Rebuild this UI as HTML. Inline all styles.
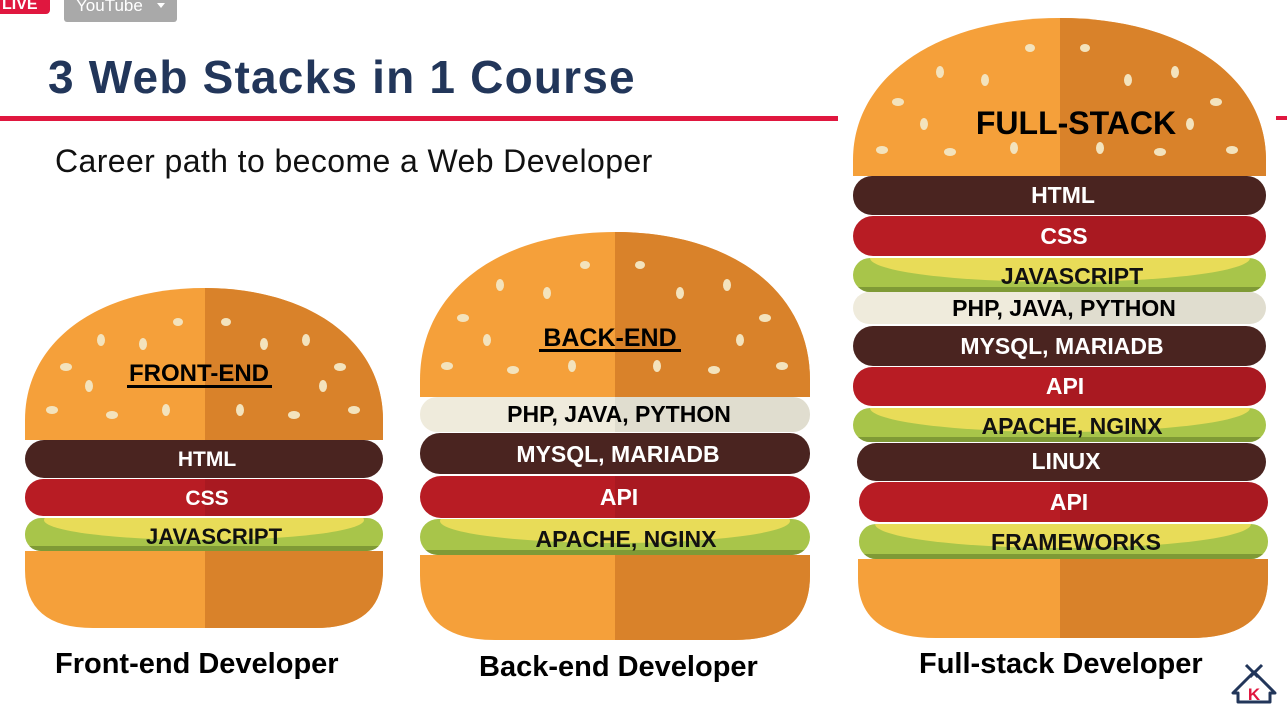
<!DOCTYPE html>
<html><head><meta charset="utf-8"><style>
html,body{margin:0;padding:0;background:#fff;width:1287px;height:720px;overflow:hidden;font-family:"Liberation Sans",sans-serif}
</style></head><body>
<svg width="1287" height="720" viewBox="0 0 1287 720" xmlns="http://www.w3.org/2000/svg" font-family="Liberation Sans, sans-serif">
<defs>
<clipPath id="r1"><rect x="205" y="0" width="300" height="720"/></clipPath>
<clipPath id="r2"><rect x="615" y="0" width="300" height="720"/></clipPath>
<clipPath id="r3"><rect x="1060" y="0" width="300" height="720"/></clipPath>
<clipPath id="g1"><rect x="25" y="518" width="358" height="33" rx="16"/></clipPath>
<clipPath id="g2"><rect x="420" y="519" width="390" height="36" rx="18"/></clipPath>
<clipPath id="g3"><rect x="853" y="258" width="413" height="34" rx="17"/></clipPath>
<clipPath id="g4"><rect x="853" y="408" width="413" height="34" rx="17"/></clipPath>
<clipPath id="g5"><rect x="859" y="524" width="409" height="35" rx="17"/></clipPath>
</defs>
<rect x="-6" y="-8" width="56" height="22" rx="4" fill="#e0173f"/>
<text x="2" y="9" font-size="16" fill="#fff" font-weight="bold">LIVE</text>
<rect x="64" y="-8" width="113" height="30" rx="3" fill="#a9a9a9"/>
<text x="76" y="11" font-size="17" fill="#fff">YouTube</text>
<path d="M157,3 L165,3 L161,8 Z" fill="#fff"/>
<text x="48" y="93" font-size="46" font-weight="bold" fill="#22365a" letter-spacing="1.2">3 Web Stacks in 1 Course</text>
<rect x="0" y="116" width="838" height="5" fill="#e0173f"/>
<rect x="1276" y="116" width="11" height="4" fill="#e0173f"/>
<text x="55" y="172" font-size="32" fill="#111" letter-spacing="0.4">Career path to become a Web Developer</text>

<!-- BURGER 1 -->
<g>
<path d="M25,420 C25,340 100,288 204,288 C308,288 383,340 383,420 L383,440 L25,440 Z" fill="#f5a03a"/>
<path d="M25,420 C25,340 100,288 204,288 C308,288 383,340 383,420 L383,440 L25,440 Z" fill="#d9822a" clip-path="url(#r1)"/>
<g fill="#f3e3bd">
<ellipse cx="178" cy="322" rx="5" ry="4"/><ellipse cx="226" cy="322" rx="5" ry="4"/>
<ellipse cx="101" cy="340" rx="4" ry="6"/><ellipse cx="143" cy="344" rx="4" ry="6"/><ellipse cx="264" cy="344" rx="4" ry="6"/><ellipse cx="306" cy="340" rx="4" ry="6"/>
<ellipse cx="66" cy="367" rx="6" ry="4"/><ellipse cx="89" cy="386" rx="4" ry="6"/><ellipse cx="323" cy="386" rx="4" ry="6"/><ellipse cx="340" cy="367" rx="6" ry="4"/>
<ellipse cx="52" cy="410" rx="6" ry="4"/><ellipse cx="112" cy="415" rx="6" ry="4"/><ellipse cx="166" cy="410" rx="4" ry="6"/><ellipse cx="240" cy="410" rx="4" ry="6"/><ellipse cx="294" cy="415" rx="6" ry="4"/><ellipse cx="354" cy="410" rx="6" ry="4"/>
</g>
<text x="199" y="381" font-size="24" font-weight="bold" text-anchor="middle" fill="#000">FRONT-END</text>
<rect x="127" y="385" width="145" height="3" fill="#000"/>
<rect x="25" y="440" width="358" height="38" rx="19" fill="#4a2420"/>
<text x="207" y="466" font-size="21" font-weight="bold" fill="#fff" text-anchor="middle">HTML</text>
<rect x="25" y="479" width="358" height="37" rx="18" fill="#b81c24"/>
<rect x="25" y="479" width="358" height="37" rx="18" fill="#000" opacity=".08" clip-path="url(#r1)"/>
<text x="207" y="505" font-size="21" font-weight="bold" fill="#fff" text-anchor="middle">CSS</text>
<rect x="25" y="518" width="358" height="33" rx="16" fill="#a8c54a"/>
<g clip-path="url(#g1)"><ellipse cx="204" cy="520" rx="160" ry="20" fill="#e8dc58"/><rect x="25" y="546" width="358" height="5" fill="#7f9a36"/></g>
<text x="214" y="544" font-size="22" font-weight="bold" fill="#111" text-anchor="middle">JAVASCRIPT</text>
<path d="M25,551 L383,551 L383,570 Q383,628 315,628 L93,628 Q25,628 25,570 Z" fill="#f5a03a"/>
<path d="M25,551 L383,551 L383,570 Q383,628 315,628 L93,628 Q25,628 25,570 Z" fill="#d9822a" clip-path="url(#r1)"/>
</g>
<text x="55" y="673" font-size="29" font-weight="bold" fill="#000">Front-end Developer</text>

<!-- BURGER 2 -->
<g>
<path d="M420,380 C420,290 500,232 615,232 C730,232 810,290 810,380 L810,397 L420,397 Z" fill="#f5a03a"/>
<path d="M420,380 C420,290 500,232 615,232 C730,232 810,290 810,380 L810,397 L420,397 Z" fill="#d9822a" clip-path="url(#r2)"/>
<g fill="#f3e3bd">
<ellipse cx="585" cy="265" rx="5" ry="4"/><ellipse cx="640" cy="265" rx="5" ry="4"/>
<ellipse cx="500" cy="285" rx="4" ry="6"/><ellipse cx="547" cy="293" rx="4" ry="6"/><ellipse cx="680" cy="293" rx="4" ry="6"/><ellipse cx="727" cy="285" rx="4" ry="6"/>
<ellipse cx="463" cy="318" rx="6" ry="4"/><ellipse cx="487" cy="340" rx="4" ry="6"/><ellipse cx="740" cy="340" rx="4" ry="6"/><ellipse cx="765" cy="318" rx="6" ry="4"/>
<ellipse cx="447" cy="366" rx="6" ry="4"/><ellipse cx="513" cy="370" rx="6" ry="4"/><ellipse cx="572" cy="366" rx="4" ry="6"/><ellipse cx="657" cy="366" rx="4" ry="6"/><ellipse cx="714" cy="370" rx="6" ry="4"/><ellipse cx="782" cy="366" rx="6" ry="4"/>
</g>
<text x="610" y="346" font-size="25" font-weight="bold" text-anchor="middle" fill="#000">BACK-END</text>
<rect x="539" y="349" width="142" height="3" fill="#000"/>
<rect x="420" y="397" width="390" height="35" rx="17" fill="#efebdc"/>
<rect x="420" y="397" width="390" height="35" rx="17" fill="#000" opacity=".06" clip-path="url(#r2)"/>
<text x="619" y="422" font-size="23" font-weight="bold" fill="#000" text-anchor="middle">PHP, JAVA, PYTHON</text>
<rect x="420" y="433" width="390" height="41" rx="20" fill="#4a2420"/>
<text x="618" y="462" font-size="23" font-weight="bold" fill="#fff" text-anchor="middle">MYSQL, MARIADB</text>
<rect x="420" y="476" width="390" height="42" rx="21" fill="#b81c24"/>
<rect x="420" y="476" width="390" height="42" rx="21" fill="#000" opacity=".08" clip-path="url(#r2)"/>
<text x="619" y="505" font-size="23" font-weight="bold" fill="#fff" text-anchor="middle">API</text>
<rect x="420" y="519" width="390" height="36" rx="18" fill="#a8c54a"/>
<g clip-path="url(#g2)"><ellipse cx="615" cy="521" rx="175" ry="22" fill="#e8dc58"/><rect x="420" y="550" width="390" height="5" fill="#7f9a36"/></g>
<text x="626" y="547" font-size="23" font-weight="bold" fill="#111" text-anchor="middle">APACHE, NGINX</text>
<path d="M420,555 L810,555 L810,575 Q810,640 735,640 L495,640 Q420,640 420,575 Z" fill="#f5a03a"/>
<path d="M420,555 L810,555 L810,575 Q810,640 735,640 L495,640 Q420,640 420,575 Z" fill="#d9822a" clip-path="url(#r2)"/>
</g>
<text x="479" y="676" font-size="29" font-weight="bold" fill="#000">Back-end Developer</text>

<!-- BURGER 3 -->
<g>
<path d="M853,160 C853,75 940,18 1060,18 C1180,18 1266,75 1266,160 L1266,176 L853,176 Z" fill="#f5a03a"/>
<path d="M853,160 C853,75 940,18 1060,18 C1180,18 1266,75 1266,160 L1266,176 L853,176 Z" fill="#d9822a" clip-path="url(#r3)"/>
<g fill="#f3e3bd">
<ellipse cx="1030" cy="48" rx="5" ry="4"/><ellipse cx="1085" cy="48" rx="5" ry="4"/>
<ellipse cx="940" cy="72" rx="4" ry="6"/><ellipse cx="985" cy="80" rx="4" ry="6"/><ellipse cx="1128" cy="80" rx="4" ry="6"/><ellipse cx="1175" cy="72" rx="4" ry="6"/>
<ellipse cx="898" cy="102" rx="6" ry="4"/><ellipse cx="924" cy="124" rx="4" ry="6"/><ellipse cx="1190" cy="124" rx="4" ry="6"/><ellipse cx="1216" cy="102" rx="6" ry="4"/>
<ellipse cx="882" cy="150" rx="6" ry="4"/><ellipse cx="950" cy="152" rx="6" ry="4"/><ellipse cx="1014" cy="148" rx="4" ry="6"/><ellipse cx="1100" cy="148" rx="4" ry="6"/><ellipse cx="1160" cy="152" rx="6" ry="4"/><ellipse cx="1232" cy="150" rx="6" ry="4"/>
</g>
<text x="1076" y="134" font-size="32" font-weight="bold" text-anchor="middle" fill="#000">FULL-STACK</text>
<rect x="853" y="176" width="413" height="39" rx="19" fill="#4a2420"/>
<text x="1063" y="203" font-size="23" font-weight="bold" fill="#fff" text-anchor="middle">HTML</text>
<rect x="853" y="216" width="413" height="40" rx="20" fill="#b81c24"/>
<rect x="853" y="216" width="413" height="40" rx="20" fill="#000" opacity=".08" clip-path="url(#r3)"/>
<text x="1064" y="244" font-size="23" font-weight="bold" fill="#fff" text-anchor="middle">CSS</text>
<rect x="853" y="258" width="413" height="34" rx="17" fill="#a8c54a"/>
<g clip-path="url(#g3)"><ellipse cx="1060" cy="258" rx="190" ry="24" fill="#e8dc58"/><rect x="853" y="287" width="413" height="5" fill="#7f9a36"/></g>
<text x="1072" y="284" font-size="23" font-weight="bold" fill="#111" text-anchor="middle">JAVASCRIPT</text>
<rect x="853" y="292" width="413" height="32" rx="16" fill="#efebdc"/>
<rect x="853" y="292" width="413" height="32" rx="16" fill="#000" opacity=".06" clip-path="url(#r3)"/>
<text x="1064" y="316" font-size="23" font-weight="bold" fill="#000" text-anchor="middle">PHP, JAVA, PYTHON</text>
<rect x="853" y="326" width="413" height="40" rx="20" fill="#4a2420"/>
<text x="1062" y="354" font-size="23" font-weight="bold" fill="#fff" text-anchor="middle">MYSQL, MARIADB</text>
<rect x="853" y="367" width="413" height="39" rx="19" fill="#b81c24"/>
<rect x="853" y="367" width="413" height="39" rx="19" fill="#000" opacity=".08" clip-path="url(#r3)"/>
<text x="1065" y="394" font-size="23" font-weight="bold" fill="#fff" text-anchor="middle">API</text>
<rect x="853" y="408" width="413" height="34" rx="17" fill="#a8c54a"/>
<g clip-path="url(#g4)"><ellipse cx="1060" cy="408" rx="190" ry="24" fill="#e8dc58"/><rect x="853" y="437" width="413" height="5" fill="#7f9a36"/></g>
<text x="1072" y="434" font-size="23" font-weight="bold" fill="#111" text-anchor="middle">APACHE, NGINX</text>
<rect x="857" y="443" width="409" height="38" rx="19" fill="#4a2420"/>
<text x="1066" y="469" font-size="23" font-weight="bold" fill="#fff" text-anchor="middle">LINUX</text>
<rect x="859" y="482" width="409" height="40" rx="20" fill="#b81c24"/>
<rect x="859" y="482" width="409" height="40" rx="20" fill="#000" opacity=".08" clip-path="url(#r3)"/>
<text x="1069" y="510" font-size="23" font-weight="bold" fill="#fff" text-anchor="middle">API</text>
<rect x="859" y="524" width="409" height="35" rx="17" fill="#a8c54a"/>
<g clip-path="url(#g5)"><ellipse cx="1063" cy="524" rx="188" ry="24" fill="#e8dc58"/><rect x="859" y="554" width="409" height="5" fill="#7f9a36"/></g>
<text x="1076" y="550" font-size="23" font-weight="bold" fill="#111" text-anchor="middle">FRAMEWORKS</text>
<path d="M858,559 L1268,559 L1268,578 Q1268,638 1190,638 L936,638 Q858,638 858,578 Z" fill="#f5a03a"/>
<path d="M858,559 L1268,559 L1268,578 Q1268,638 1190,638 L936,638 Q858,638 858,578 Z" fill="#d9822a" clip-path="url(#r3)"/>
</g>
<text x="919" y="673" font-size="29" font-weight="bold" fill="#000">Full-stack Developer</text>

<g fill="none" stroke="#22365a" stroke-width="3" stroke-linejoin="round">
<path d="M1246,665 L1258,677 M1262,665 L1250,677"/>
<path d="M1254,672 L1233,693 L1238,693 L1238,702 L1270,702 L1270,693 L1275,693 Z"/>
</g>
<text x="1254" y="700" font-size="17" font-weight="bold" fill="#e0173f" text-anchor="middle">K</text>
</svg>
</body></html>
